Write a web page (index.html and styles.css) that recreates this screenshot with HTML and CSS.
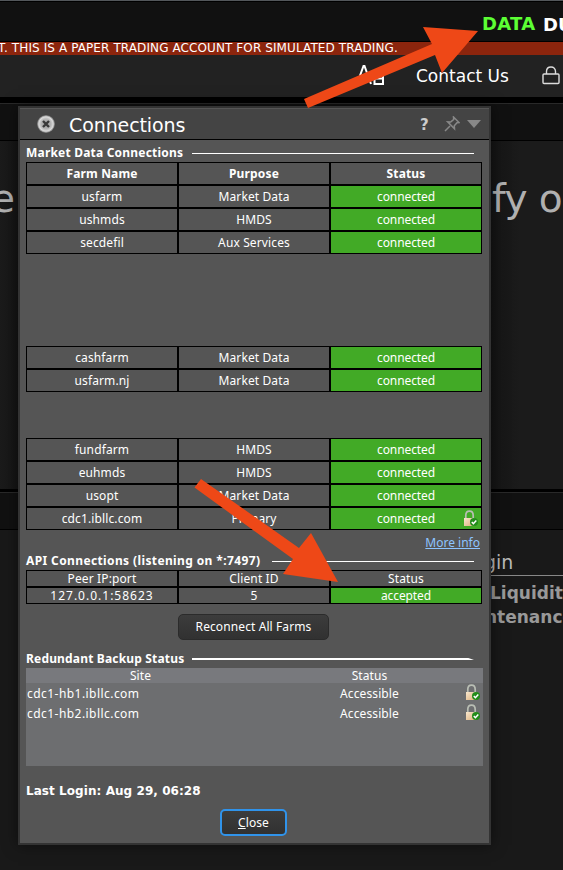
FILE: index.html
```
<!DOCTYPE html>
<html lang="en">
<head>
<meta charset="utf-8">
<title>Connections</title>
<link rel="stylesheet" href="styles.css">
</head>
<body>
<svg class="defs" width="0" height="0" aria-hidden="true">
  <defs>
    <linearGradient id="body" x1="0" x2="1" y1="0" y2="1"><stop offset="0" stop-color="#f8e6cd"/><stop offset="1" stop-color="#dcae79"/></linearGradient>
    <radialGradient id="knob"><stop offset="0" stop-color="#9a9a9a"/><stop offset=".55" stop-color="#b5b5b5"/><stop offset=".8" stop-color="#dcdcdc"/><stop offset="1" stop-color="#666"/></radialGradient>
    <symbol id="secure" viewBox="0 0 14 17">
      <path d="M1.800 8.500V5.400C1.800 2.600 3.300 1.100 5.500 1.100S9.200 2.600 9.200 5.400v3.100" fill="none" stroke="#b9beb4" stroke-width="1.700"/>
      <rect y="8" width="11" height="8" fill="url(#body)"/>
      <circle cx="10" cy="12" r="4" fill="#238c1b"/>
      <path d="M7.800 12l1.600 1.700 2.900-3.300" fill="none" stroke="#fff" stroke-width="1.500"/>
    </symbol>
  </defs>
</svg>
<div class="app">
  <header class="top"><span class="data">DATA</span><span class="account">DU</span></header>
  <div class="notice">T. THIS IS A PAPER TRADING ACCOUNT FOR SIMULATED TRADING.</div>
  <nav class="toolbar">
    <svg class="fontsize" width="29" height="20" viewBox="0 0 29 20"><path d="M1 19L7.500 1h1L15 19M3.500 12.500h9M18 9.500h9V19h-8.500v-5.500H27" fill="none" stroke="#fff" stroke-width="2"/></svg>
    <span class="contact">Contact Us</span>
    <svg class="padlock" width="18" height="19" viewBox="0 0 18 19"><path d="M4.500 8V5.500C4.500 2.600 6.300 1 9 1s4.500 1.600 4.500 4.500V8" fill="none" stroke="#ddd" stroke-width="1.400"/><rect x="1" y="8" width="16" height="9.500" rx="1" fill="none" stroke="#ddd" stroke-width="1.400"/></svg>
  </nav>
  <div class="tabs"></div>
  <div class="pane"><span>e</span><span>fy o</span></div>
  <div class="tabs lower"></div>
  <div class="metrics">
    <div class="metrics-title">gin</div>
    <div class="metric">Liquidity</div>
    <div class="metric clip"><span>ntenance</span></div>
  </div>
</div>

<section class="dialog">
  <div class="titlebar">
    <svg width="20" height="20" viewBox="0 0 20 20"><circle cx="10" cy="10" r="9" fill="url(#knob)"/><path d="M7 7l6 6M13 7l-6 6" stroke="#383838" stroke-width="2.400"/></svg>
    <h1>Connections</h1>
    <span class="help">?</span>
    <svg class="pin" width="16" height="16" viewBox="0 0 16 16"><path d="M1 15l5-5M9.500 1l5.500 5.500-2 .2-2.700 3 .2 3-6.800-6.800 3 .2 3-2.700z" fill="none" stroke="#888" stroke-width="1.500"/></svg>
    <svg class="caret" width="14" height="8" viewBox="0 0 14 8"><path d="M0 0h14L7 8z" fill="#888"/></svg>
  </div>
  <div class="content">
    <h2 class="first"><span class="t-market">Market Data Connections</span></h2>
    <div class="farms">
      <div class="row head"><b>Farm Name</b><b>Purpose</b><b>Status</b></div>
      <div class="row"><span>usfarm</span><span>Market Data</span><span class="ok">connected</span></div>
      <div class="row"><span>ushmds</span><span>HMDS</span><span class="ok">connected</span></div>
      <div class="row gap4"><span>secdefil</span><span>Aux Services</span><span class="ok">connected</span></div>
      <div class="row"><span>cashfarm</span><span>Market Data</span><span class="ok">connected</span></div>
      <div class="row gap2"><span>usfarm.nj</span><span>Market Data</span><span class="ok">connected</span></div>
      <div class="row"><span>fundfarm</span><span>HMDS</span><span class="ok">connected</span></div>
      <div class="row"><span>euhmds</span><span>HMDS</span><span class="ok">connected</span></div>
      <div class="row"><span>usopt</span><span>Market Data</span><span class="ok">connected</span></div>
      <div class="row"><span>cdc1.ibllc.com</span><span>Primary</span><span class="ok">connected<svg class="lock" width="14" height="17"><use href="#secure"/></svg></span></div>
    </div>
    <div class="more"><a>More info</a></div>
    <h2 class="api"><span class="t-api">API Connections (listening on *:7497)</span></h2>
    <div class="farms peers">
      <div class="row"><span>Peer IP:port</span><span>Client ID</span><span>Status</span></div>
      <div class="row"><span class="num">127.0.0.1:58623</span><span>5</span><span class="ok">accepted</span></div>
    </div>
    <button class="reconnect">Reconnect All Farms</button>
    <h2 class="backup"><span class="t-backup">Redundant Backup Status</span></h2>
    <div class="sites">
      <div class="site site-head"><span>Site</span><span>Status</span></div>
      <div class="site"><span class="host">cdc1-hb1.ibllc.com</span><span>Accessible</span><svg class="lock" width="14" height="17"><use href="#secure"/></svg></div>
      <div class="site"><span class="host">cdc1-hb2.ibllc.com</span><span>Accessible</span><svg class="lock" width="14" height="17"><use href="#secure"/></svg></div>
    </div>
    <div class="login">Last Login: Aug 29, 06:28</div>
    <button class="close"><u>C</u>lose</button>
  </div>
</section>

<svg class="arrows" width="563" height="870" viewBox="0 0 563 870">
  <path fill="#ee4817" d="M304 99L432 44 423 27 478 31 442 73 435 55 308 108z"/>
  <path fill="#ee4817" d="M201 479L299 548 311 533 338 582 283 574 293 559 194.500 487.500z"/>
</svg>
</body>
</html>
```

FILE: styles.css
```
* { box-sizing: border-box; }
body {
  margin: 0;
  width: 563px;
  height: 870px;
  overflow: hidden;
  position: relative;
  background: #191919;
  color: #fff;
  font: 12px/16px "Noto Sans", sans-serif;
}
svg { display: block; flex: none; }
.defs { position: absolute; }
.app { height: 870px; overflow: hidden; font-family: "DejaVu Sans", sans-serif; }
.top {
  height: 42px;
  border-top: 1px solid #53575b;
  border-bottom: 1px solid #000;
  box-shadow: inset 0 1px #000;
  background: #111;
  display: flex;
  padding: 11px 0 0 482px;
  font-size: 18px;
  line-height: 24px;
  font-weight: bold;
  white-space: nowrap;
}
.data { color: #5cff34; flex: none; width: 61px; letter-spacing: .3px; }
.account { flex: none; padding-top: 1px; }
.notice {
  height: 13px;
  background: #8c250d;
  font-size: 12px;
  line-height: 13px;
  letter-spacing: .1px;
  white-space: nowrap;
  text-indent: -2px;
}
.toolbar { height: 42px; background: #222; display: flex; padding-left: 356px; }
.fontsize { margin-top: 10px; }
.contact { margin: 9px 0 0 31px; width: 93px; font-size: 17px; line-height: 24px; white-space: nowrap; }
.padlock { margin: 11px 0 0 33px; }
.tabs {
  height: 44px;
  border-top: 6px solid #000;
  border-bottom: 1px solid #000;
  background: #111;
  box-shadow: inset 0 1px #292929;
}
.tabs.lower { height: 41px; border-top-width: 3px; }
.pane {
  height: 348px;
  background: linear-gradient(90deg, #1b1b1b, #151515 18px, #151515 491px, #1b1b1b 520px);
  display: flex;
  justify-content: space-between;
  padding-top: 34px;
  font-size: 39px;
  line-height: 48px;
  color: #b0b0b0;
  white-space: nowrap;
}
.pane span:first-child { margin-left: -9px; }
.pane span:last-child { width: 71px; letter-spacing: -.6px; }
.metrics { margin-left: 485px; padding-top: 20px; color: #999; white-space: nowrap; }
.metrics-title { font-size: 19px; line-height: 24px; color: #bbb; border-bottom: 1px solid #888; height: 26px; margin: 0 0 5px -1px; }
.metric { font-size: 17px; line-height: 24px; font-weight: bold; padding-left: 5px; }
.metric.clip { padding-left: 0; }

.dialog {
  position: absolute;
  left: 18px;
  top: 106px;
  width: 473px;
  height: 739px;
  border: 2px solid #333;
  background: #555;
  box-shadow: 0 0 14px rgba(0,0,0,.5);
}
.titlebar {
  height: 32px;
  background: #444;
  border-top: 1px solid #555;
  border-bottom: 1px solid #000;
  display: flex;
  align-items: center;
  padding-left: 16px;
  font-family: "DejaVu Sans", sans-serif;
}
h1 { margin: 2px 0 0 13px; width: 351px; font-size: 19px; line-height: 24px; font-weight: normal; letter-spacing: -.1px; }
.help { width: 24px; margin-top: 1px; font-size: 15px; font-weight: bold; color: #ccc; }
.pin { margin-right: 7px; }
.content { padding: 5px 0 0 6px; }
h2 {
  margin: 0;
  height: 16px;
  width: 448px;
  display: flex;
  align-items: center;
  font-size: 12px;
  line-height: 16px;
  white-space: nowrap;
}
h2::after { content: ""; height: 1px; flex: 1; background: #fff; }
h2 span { flex: none; }
.t-market { width: 166px; letter-spacing: .2px; }
.t-api { width: 246px; letter-spacing: .38px; }
.t-backup { width: 166px; letter-spacing: .17px; }
.backup::after { height: 2px; clip-path: polygon(0 0, 98% 0, 100% 100%, 0 100%); }
.farms { margin-top: 1px; }
.row { display: grid; grid-template-columns: repeat(3, 152px); height: 23px; text-align: center; line-height: 21px; }
.row > * { border: 1px solid #000; white-space: nowrap; letter-spacing: .12px; }
.row b { letter-spacing: .15px; }
.gap4 { margin-bottom: 92px; }
.gap2 { margin-bottom: 46px; }
.row .ok { background: #42aa26; position: relative; letter-spacing: -.1px; }
.ok .lock { position: absolute; right: 3px; top: 2px; }
.more { height: 22px; padding: 5px 9px 0 0; text-align: right; line-height: 16px; }
.more a { color: #8dc4ff; text-decoration: underline; }
.api { position: relative; top: 1px; }
.peers { margin-top: 2px; }
.peers .row { height: 17px; line-height: 15px; }
.peers .row .num { letter-spacing: 1px; }
button {
  display: block;
  padding: 0;
  color: #fff;
  font: 12px/22px "Noto Sans", sans-serif;
  background: linear-gradient(#3c3c3c, #313131);
  border: 1px solid #2b2b2b;
  border-radius: 5px;
}
.reconnect { width: 151px; height: 26px; margin: 10px 0 0 152px; letter-spacing: .1px; }
.backup { margin-top: 11px; }
.sites { width: 457px; height: 98px; margin-top: 1px; background: #6d6e70; }
.site { height: 20px; display: grid; grid-template-columns: 227px 231px 14px; line-height: 22px; padding-left: 1px; letter-spacing: .1px; }
.site .host { letter-spacing: .45px; }
.site span:nth-child(2) { text-align: center; }
.site .lock { margin: 1px 0 0 -19px; }
.site.site-head { height: 15px; line-height: 15px; background: #78797d; text-align: center; }
.login { margin-top: 17px; height: 16px; font: bold 12px/16px "DejaVu Sans", sans-serif; letter-spacing: .06px; white-space: nowrap; }
.close { width: 67px; height: 27px; margin: 10px 0 0 194px; border: 2px solid #3093ea; letter-spacing: .1px; }
.arrows { position: absolute; left: 0; top: 0; pointer-events: none; }
```
